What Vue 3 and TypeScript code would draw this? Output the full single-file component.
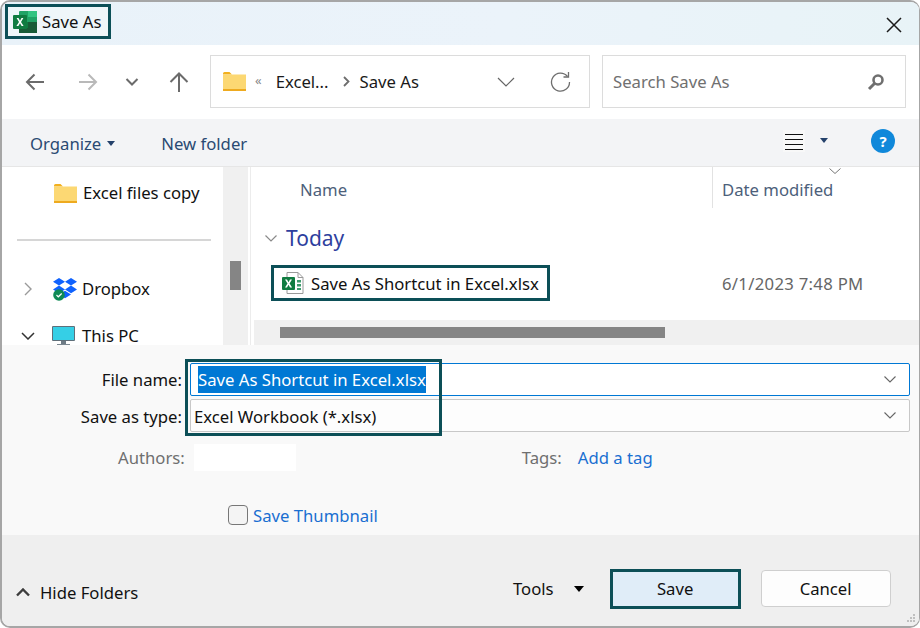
<script setup lang="ts">
// Save As dialog: static recreation, rows come from small data lists
const fileName = "Save As Shortcut in Excel.xlsx";
const gripDots = [
  [6, 0],
  [3, 3],
  [6, 3],
  [0, 6],
  [3, 6],
  [6, 6],
];
</script>

<template>
  <div class="dialog">
    <header class="titlebar">
      <div class="title mark">
        <svg class="xl-logo" width="24" height="22" viewBox="0 0 24 22">
          <rect x="6" y="0" width="18" height="22" rx="1" fill="#21a366" />
          <rect x="15" y="0" width="9" height="6" fill="#33c481" />
          <rect x="6" y="11" width="9" height="6" fill="#107c41" />
          <rect x="15" y="11" width="9" height="6" fill="#185c37" />
          <rect x="6" y="17" width="18" height="5" fill="#185c37" />
          <rect x="0" y="4" width="14" height="14" rx="1" fill="#107c41" />
          <path d="M3.600 7 6 11l-2.600 4h2l1.600-2.700L8.600 15h2L8 11l2.400-4H8.500L7 9.700 5.500 7z" fill="#fff" />
        </svg>
        <span>Save As</span>
      </div>
      <svg class="close" width="18" height="18" viewBox="0 0 18 18">
        <path d="M2 2l14 14M16 2 2 16" stroke="#1a1a1a" stroke-width="1.500" fill="none" />
      </svg>
    </header>

    <nav class="navbar">
      <div class="nav-btns">
        <svg width="22" height="20" viewBox="0 0 22 20">
          <path d="M20 10H3M10.500 2.500 3 10l7.500 7.500" stroke="#6b6b6b" stroke-width="2" fill="none" />
        </svg>
        <svg width="22" height="20" viewBox="0 0 22 20">
          <path d="M2 10h17M11.500 2.500 19 10l-7.500 7.500" stroke="#b9b9b9" stroke-width="2" fill="none" />
        </svg>
        <svg width="14" height="10" viewBox="0 0 14 10">
          <path d="M1.500 2 7 7.500 12.500 2" stroke="#6b6b6b" stroke-width="2" fill="none" />
        </svg>
        <svg width="22" height="22" viewBox="0 0 22 22">
          <path d="M11 21V3M2.500 11 11 2.500 19.500 11" stroke="#6b6b6b" stroke-width="2" fill="none" />
        </svg>
      </div>
      <div class="address">
        <svg class="folder" width="23" height="19" viewBox="0 0 23 19">
          <path d="M0 1.500A1.500 1.500 0 0 1 1.500 0h5L9 2.500H0z" fill="#f2b01e" />
          <rect y="2.500" width="23" height="16" fill="#fcd873" />
          <rect y="17" width="23" height="2" fill="#eeaa1f" />
        </svg>
        <span class="crumb-more">«</span>
        <span class="crumb">Excel...</span>
        <svg class="crumb-sep" width="7" height="11" viewBox="0 0 7 11">
          <path d="M1 1l4.500 4.500L1 10" stroke="#6d6d6d" stroke-width="1.800" fill="none" />
        </svg>
        <span class="crumb">Save As</span>
        <svg class="addr-chev" width="18" height="10" viewBox="0 0 18 10">
          <path d="M1 1l8 8 8-8" stroke="#666" stroke-width="1.200" fill="none" />
        </svg>
        <svg class="refresh" width="21" height="21" viewBox="0 0 21 21">
          <path d="M17.500 5.500A9 9 0 1 0 19.500 11" stroke="#6e6e6e" stroke-width="1.300" fill="none" />
          <path d="M13.500 6h5V1" stroke="#6e6e6e" stroke-width="1.300" fill="none" />
        </svg>
      </div>
      <div class="search">
        <span>Search Save As</span>
        <svg width="18" height="18" viewBox="0 0 18 18">
          <circle cx="11" cy="7" r="4.500" stroke="#6f6f6f" stroke-width="2.600" fill="none" />
          <path d="M7.500 10.500 2 16" stroke="#6f6f6f" stroke-width="3" />
        </svg>
      </div>
    </nav>

    <div class="toolbar">
      <span class="tool">Organize</span>
      <i class="caret navy"></i>
      <span class="tool new-folder">New folder</span>
      <div class="tool-right">
        <svg class="list-icon" width="22" height="22" viewBox="0 0 22 22">
          <rect width="22" height="22" fill="#f8f8f8" />
          <path d="M2 4.500h18M2 9.500h18M2 14.500h18M2 19.500h18" stroke="#111" stroke-width="1" />
        </svg>
        <i class="caret navy view-caret"></i>
        <div class="help">?</div>
      </div>
    </div>

    <main class="browser">
      <aside class="sidebar">
        <div class="side-pane">
          <div class="side-row first">
            <svg class="folder" width="23" height="19" viewBox="0 0 23 19">
              <path d="M0 1.500A1.500 1.500 0 0 1 1.500 0h5L9 2.500H0z" fill="#f2b01e" />
              <rect y="2.500" width="23" height="16" fill="#fcd873" />
              <rect y="17" width="23" height="2" fill="#eeaa1f" />
            </svg>
            <span>Excel files copy</span>
          </div>
          <div class="side-rule"></div>
          <div class="side-row dropbox">
            <svg class="tree-chev" width="8" height="14" viewBox="0 0 8 14">
              <path d="M1 1l6 6-6 6" stroke="#9a9a9a" stroke-width="1.400" fill="none" />
            </svg>
            <svg class="dbx" width="24" height="23" viewBox="0 0 24 23">
              <path d="M6 0l6 3.800L6 7.600 0 3.800zM18 0l6 3.800-6 3.800-6-3.800zM0 11.400l6-3.800 6 3.800-6 3.800zM18 7.600l6 3.800-6 3.800-6-3.800zM6 16.500l6-3.800 6 3.800-6 3.800z" fill="#0f62fe" />
              <circle cx="6" cy="17" r="5.800" fill="#0e8a55" />
              <path d="M3.500 17l1.800 1.800L8.700 15.500" stroke="#fff" stroke-width="1.200" fill="none" />
            </svg>
            <span>Dropbox</span>
          </div>
          <div class="side-row thispc">
            <svg class="tree-chev" width="14" height="8" viewBox="0 0 14 8">
              <path d="M1 1l6 6 6-6" stroke="#333" stroke-width="1.500" fill="none" />
            </svg>
            <svg class="pc" width="23" height="20" viewBox="0 0 23 20">
              <rect width="23" height="15" rx="1" fill="#5f6f7a" />
              <rect x="1" y="1" width="21" height="13" fill="#35cfe6" />
              <rect x="9" y="15" width="5" height="3" fill="#6d7b85" />
              <rect x="5" y="18" width="13" height="2" fill="#7b8790" />
            </svg>
            <span>This PC</span>
          </div>
        </div>
        <div class="v-track"><div class="v-thumb"></div></div>
      </aside>

      <section class="files">
        <div class="col-heads">
          <div class="col-name">Name</div>
          <div class="col-date">
            <svg class="sort" width="12" height="6" viewBox="0 0 12 6">
              <path d="M.5.500 6 5.500 11.500.5" stroke="#777" stroke-width="1" fill="none" />
            </svg>
            Date modified
          </div>
        </div>
        <div class="group">
          <svg width="12" height="7" viewBox="0 0 12 7">
            <path d="M.5.500 6 6 11.500.5" stroke="#8a8a8a" stroke-width="1.200" fill="none" />
          </svg>
          <span>Today</span>
        </div>
        <div class="file-row">
          <div class="file mark">
            <svg width="22" height="22" viewBox="0 0 22 22">
              <path d="M5 .5h11l5 5v16H5z" fill="#fff" stroke="#9a9a9a" />
              <path d="M16 .5v5h5" fill="none" stroke="#9a9a9a" />
              <path d="M15 8h4v2.500h-4zM15 12h4v2.500h-4zM15 16h4v2h-4z" fill="#3f9b6e" />
              <rect y="5" width="13" height="13" rx="1" fill="#107c41" />
              <path d="M3 7.500h2L6.500 10.200 8 7.500h2L7.600 11.500 10.100 15.500H8L6.500 12.800 5 15.500H3l2.500-4z" fill="#fff" />
            </svg>
            <span>{{ fileName }}</span>
          </div>
          <div class="file-date">6/1/2023 7:48 PM</div>
        </div>
        <div class="h-track"><div class="h-thumb"></div></div>
      </section>
    </main>

    <section class="form">
      <div class="field-row">
        <label>File name:</label>
        <div class="combo active">
          <span class="selected">{{ fileName }}</span>
          <svg width="12" height="7" viewBox="0 0 12 7">
            <path d="M.5.500 6 6 11.500.5" stroke="#666" stroke-width="1.100" fill="none" />
          </svg>
        </div>
      </div>
      <div class="field-row second">
        <label>Save as type:</label>
        <div class="combo">
          <span>Excel Workbook (*.xlsx)</span>
          <svg width="12" height="7" viewBox="0 0 12 7">
            <path d="M.5.500 6 6 11.500.5" stroke="#666" stroke-width="1.100" fill="none" />
          </svg>
        </div>
      </div>
      <div class="meta">
        <span class="meta-label authors">Authors:</span>
        <div class="authors-box"></div>
        <span class="meta-label tags">Tags:</span>
        <span class="link add-tag">Add a tag</span>
      </div>
      <div class="thumb-row">
        <i class="check"></i>
        <span class="link">Save Thumbnail</span>
      </div>
      <div class="callout"></div>
    </section>

    <footer class="footer">
      <div class="hide">
        <svg width="14" height="9" viewBox="0 0 14 9">
          <path d="M1 7.500l6-6 6 6" stroke="#3c3c3c" stroke-width="2.400" fill="none" />
        </svg>
        <span>Hide Folders</span>
      </div>
      <span class="tools">Tools</span>
      <i class="caret black"></i>
      <button type="button" class="btn save">Save</button>
      <button type="button" class="btn cancel">Cancel</button>
      <div class="grip">
        <i v-for="(d, i) in gripDots" :key="i" :style="{ left: d[0] + 'px', top: d[1] + 'px' }"></i>
      </div>
    </footer>
  </div>
</template>

<style scoped>
.dialog {
  display: flex;
  flex-direction: column;
  width: 920px;
  height: 628px;
  box-sizing: border-box;
  overflow: hidden;
  color: #111;
  font-family: "Noto Sans", "Open Sans", sans-serif;
  font-size: 16.700px;
  background: #fff;
  border: 2px solid #a6a6a6;
  border-right-width: 1px;
  border-radius: 10px;
}

.mark {
  box-sizing: border-box;
  border: 3px solid #0c4f57;
}

.titlebar {
  display: flex;
  align-items: flex-start;
  justify-content: space-between;
  flex: none;
  box-sizing: border-box;
  height: 43px;
  padding: 2px 16px 0 3px;
  background: linear-gradient(90deg, #e9f2f9, #ebf3fa 55%, #e8f3f7);
}

.title {
  display: flex;
  align-items: center;
  gap: 5px;
  width: 106px;
  height: 35px;
  padding-left: 5px;
  background: #eff6f9;
}

.close {
  margin-top: 12px;
}

.navbar {
  display: flex;
  align-items: flex-start;
  flex: none;
  height: 74px;
  padding: 10px 13px 0 0;
  box-sizing: border-box;
}

.nav-btns {
  display: grid;
  grid-template-columns: 53px 48px 43px 22px;
  align-items: center;
  width: 208px;
  height: 53px;
  padding-left: 22px;
  box-sizing: border-box;
}

.address,
.search {
  display: flex;
  align-items: center;
  box-sizing: border-box;
  height: 53px;
  background: #fff;
  border: 1.500px solid #dcdcdc;
}

.address {
  width: 380px;
  padding: 0 18px 0 12px;
}

.crumb-more {
  margin: -3px 14px 0 9px;
  color: #888;
  font-size: 13px;
}

.crumb {
  color: #1a1a1a;
}

.crumb-sep {
  margin: 0 10px 0 14px;
}

.addr-chev {
  margin-left: auto;
  margin-right: 35px;
}

.search {
  justify-content: space-between;
  width: 304px;
  margin-left: 12px;
  padding: 0 20px 0 10px;
  color: #707070;
}

.toolbar {
  display: flex;
  align-items: center;
  flex: none;
  height: 48px;
  box-sizing: border-box;
  padding: 1px 24px 0 28px;
  background: #f3f4f6;
  border-bottom: 1px solid #e6e6e6;
}

.tool {
  color: #2a4a72;
}

.caret {
  width: 0;
  height: 0;
  border-style: solid;
  border-color: transparent;
  border-width: 5px 4.500px 0;
}

.navy {
  margin: 0 0 0 6px;
  border-top-color: #24416b;
}

.new-folder {
  margin-left: 46px;
}

.tool-right {
  display: flex;
  align-items: center;
  margin: -5px 0 0 auto;
}

.view-caret {
  margin: 0 43px 0 15px;
}

.help {
  width: 24px;
  height: 24px;
  color: #fff;
  font-size: 15px;
  font-weight: 700;
  line-height: 24px;
  text-align: center;
  background: #1088da;
  border-radius: 50%;
}

.browser {
  display: flex;
  flex: none;
  height: 178px;
  overflow: hidden;
}

.sidebar {
  display: flex;
  flex: none;
  width: 247px;
}

.side-pane {
  flex: none;
  width: 221px;
  overflow: hidden;
}

.side-row {
  display: flex;
  align-items: center;
  height: 24px;
  line-height: 24px;
  white-space: nowrap;
}

.first {
  margin-top: 14px;
  padding-left: 52px;
}

.first .folder {
  margin-right: 6px;
}

.side-rule {
  width: 194px;
  height: 2px;
  margin: 34px 0 0 15px;
  background: #d6d6d6;
}

.dropbox {
  margin-top: 36px;
  padding-left: 22px;
}

.dropbox .dbx {
  margin: 0 5px 0 21px;
}

/* last row sits right at the pane's lower edge, kept short so its text stays whole */
.thispc {
  height: 18px;
  margin-top: 26px;
  padding-left: 19px;
  line-height: 18px;
}

.thispc .pc {
  margin: 0 7px 0 17px;
}

.v-track {
  flex: none;
  width: 25px;
  background: #f0f0f0;
}

.v-thumb {
  width: 11px;
  height: 29px;
  margin: 94px 0 0 7px;
  background: #858585;
}

.files {
  display: flex;
  flex: 1;
  flex-direction: column;
  min-width: 0;
  margin-left: 1px;
  border-left: 1px solid #ececec;
}

.col-heads {
  display: flex;
  flex: none;
  height: 41px;
  color: #4c607a;
}

.col-name {
  box-sizing: border-box;
  width: 462px;
  padding: 11px 0 0 49px;
  border-right: 1px solid #e2e2e2;
}

.col-date {
  position: relative;
  padding: 11px 0 0 9px;
}

.sort {
  position: absolute;
  top: 1px;
  left: 116px;
}

.group {
  display: flex;
  align-items: center;
  gap: 9px;
  height: 30px;
  margin: 15px 0 0 14px;
  color: #2e3f9e;
  font-size: 21px;
}

.file-row {
  display: flex;
  align-items: center;
  flex: none;
  height: 36px;
  margin: 12px 0 0 20px;
}

.file {
  display: flex;
  align-items: center;
  gap: 7px;
  width: 279px;
  height: 36px;
  padding-left: 8px;
}

.file-date {
  margin-left: 172px;
  color: #666;
  letter-spacing: 0.300px;
}

.h-track {
  flex: none;
  height: 25px;
  margin: 19px 0 0 3px;
  padding-top: 7px;
  box-sizing: border-box;
  background: #f0f0f0;
}

.h-thumb {
  width: 385px;
  height: 11px;
  margin-left: 26px;
  background: #858585;
}

.form {
  position: relative;
  flex: none;
  height: 190px;
  box-sizing: border-box;
  padding: 18px 9px 0 0;
  background: #f9f9f9;
}

.field-row {
  display: flex;
  align-items: center;
  height: 33px;
}

.second {
  margin-top: 3px;
}

.second label,
.second .combo span {
  padding-top: 2px;
}

.field-row label {
  flex: none;
  width: 180px;
  text-align: right;
}

.combo {
  display: flex;
  align-items: center;
  justify-content: space-between;
  flex: 1;
  box-sizing: border-box;
  height: 33px;
  margin-left: 8px;
  padding: 0 13px 0 3px;
  background: #fdfdfd;
  border: 1px solid #c8c8c8;
  border-radius: 2px;
}

.active {
  padding-left: 7px;
  background: #fff;
  border-color: #0078d4;
}

.selected {
  color: #fff;
  line-height: 27px;
  background: #0078d4;
}

.meta {
  display: flex;
  align-items: center;
  height: 27px;
  margin-top: 12px;
  color: #6f6f6f;
}

.authors {
  margin-left: 116px;
}

.authors-box {
  width: 102px;
  height: 27px;
  margin-left: 9px;
  background: #fff;
}

.tags {
  margin-left: 226px;
}

.link {
  color: #1a6fd1;
}

.add-tag {
  margin-left: 16px;
}

.thumb-row {
  display: flex;
  align-items: center;
  gap: 5px;
  height: 20px;
  margin: 34px 0 0 226px;
}

.check {
  width: 20px;
  height: 20px;
  box-sizing: border-box;
  background: #f4f4f4;
  border: 1px solid #777;
  border-radius: 4px;
}

/* teal annotation drawn over the two name/type fields */
.callout {
  position: absolute;
  top: 14px;
  left: 183px;
  width: 257px;
  height: 77px;
  box-sizing: border-box;
  border: 3px solid #0c4f57;
}

.footer {
  position: relative;
  display: flex;
  align-items: center;
  flex: 1;
  box-sizing: border-box;
  padding: 16px 27px 0 14px;
  background: #efefef;
}

.hide {
  display: flex;
  align-items: center;
  flex: none;
  gap: 10px;
  width: 497px;
  margin-top: 7px;
  white-space: nowrap;
}

.black {
  margin-left: 20px;
  border-width: 6px 5.500px 0;
  border-top-color: #000;
}

.btn {
  box-sizing: border-box;
  width: 130px;
  height: 37px;
  padding: 0;
  color: #111;
  font: inherit;
  border-radius: 4px;
}

.save {
  width: 131px;
  height: 40px;
  margin-left: 26px;
  background: #e0edf8;
  border: 3px solid #0c4f57;
  border-radius: 0;
}

.cancel {
  margin-left: 20px;
  background: #fdfdfd;
  border: 1px solid #cfcfcf;
}

.grip {
  position: absolute;
  right: 3px;
  bottom: 3px;
  width: 9px;
  height: 9px;
}

.grip i {
  position: absolute;
  width: 2px;
  height: 2px;
  background: #c0c0c0;
}
</style>

<style>
body {
  margin: 0;
  background: #fff;
}
</style>
